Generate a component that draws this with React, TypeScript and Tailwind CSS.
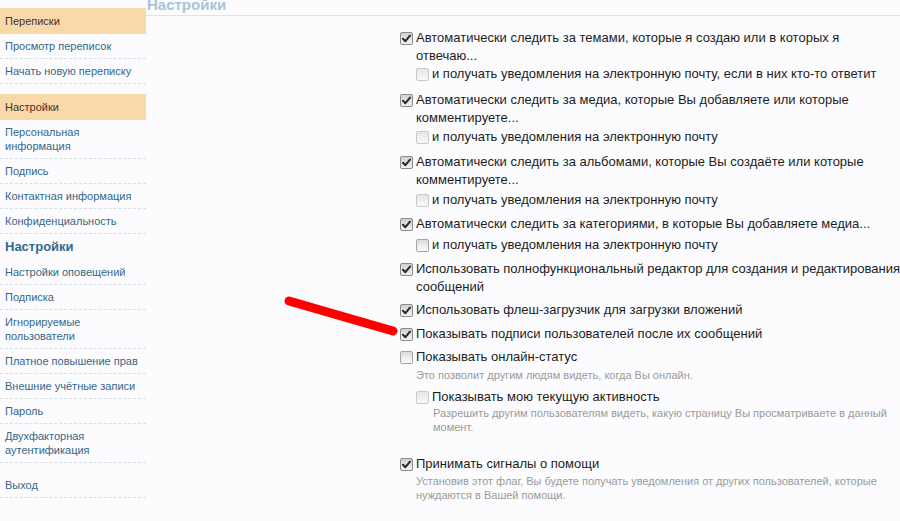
import React from "react";

type Box = "checked" | "unchecked" | "disabled";

function CheckBox({ state }: { state: Box }) {
  const cls =
    state === "checked"
      ? "border-[#8a8a8a] bg-linear-to-b from-[#d2d2d2] to-[#f2f2f2]"
      : state === "unchecked"
      ? "border-[#a4a4a4] bg-linear-to-b from-[#dcdcdc] to-[#fbfbfb]"
      : "border-[#c9c9c9] bg-linear-to-b from-[#e6e6e6] to-[#f8f8f8]";
  return (
    <span
      className={`mt-[3px] flex h-[13px] w-[13px] shrink-0 items-center justify-center rounded-[2px] border ${cls}`}
    >
      {state === "checked" && (
        <svg width="11" height="11" viewBox="0 0 11 11">
          <path
            d="M2 5.8 L4.4 8.2 L9 2.6"
            fill="none"
            stroke="#2a2a2a"
            strokeWidth="2"
            strokeLinecap="round"
            strokeLinejoin="round"
          />
        </svg>
      )}
    </span>
  );
}

function Row({
  state,
  children,
  className = "",
  sub = false,
}: {
  state: Box;
  children: React.ReactNode;
  className?: string;
  sub?: boolean;
}) {
  return (
    <div className={`flex gap-[3px] ${sub ? "pl-[16px]" : ""} ${className}`}>
      <CheckBox state={state} />
      <div className="whitespace-nowrap text-[13px] leading-[18px] text-[#1c1c1c]">{children}</div>
    </div>
  );
}

function Desc({ children, className = "", sub = false }: { children: React.ReactNode; className?: string; sub?: boolean }) {
  return (
    <div
      className={`whitespace-nowrap text-[11px] leading-[14px] text-[#9a9a9a] ${sub ? "pl-[33px]" : "pl-[16px]"} ${className}`}
    >
      {children}
    </div>
  );
}

function SideItem({ children }: { children: React.ReactNode }) {
  return (
    <div className="border-b border-dashed border-[#d6dfe5] px-[5px] pt-[5px] pb-[5px] text-[11px] leading-[14px] text-[#356787]">
      {children}
    </div>
  );
}

function SideHeader({ children, className = "" }: { children: React.ReactNode; className?: string }) {
  return (
    <div className={`flex h-[26px] items-center bg-[#f9d8aa] px-[5px] text-[11px] text-[#4a321a] ${className}`}>
      {children}
    </div>
  );
}

export default function App() {
  return (
    <div
      className="relative h-[521px] w-[900px] overflow-hidden bg-[#fcfcfe]"
      style={{ fontFamily: '"Liberation Sans", Arial, sans-serif' }}
    >
      <div className="flex">
        <aside className="w-[146px] shrink-0 pt-[8px]">
          <SideHeader>Переписки</SideHeader>
          <SideItem>Просмотр переписок</SideItem>
          <SideItem>Начать новую переписку</SideItem>
          <SideHeader className="mt-[10px]">Настройки</SideHeader>
          <SideItem>
            Персональная
            <br />
            информация
          </SideItem>
          <SideItem>Подпись</SideItem>
          <SideItem>Контактная информация</SideItem>
          <SideItem>Конфиденциальность</SideItem>
          <div className="flex h-[26px] items-center px-[5px] text-[13px] font-bold text-[#2f6a8e]">Настройки</div>
          <SideItem>Настройки оповещений</SideItem>
          <SideItem>Подписка</SideItem>
          <SideItem>
            Игнорируемые
            <br />
            пользователи
          </SideItem>
          <SideItem>Платное повышение прав</SideItem>
          <SideItem>Внешние учётные записи</SideItem>
          <SideItem>Пароль</SideItem>
          <SideItem>
            Двухфакторная
            <br />
            аутентификация
          </SideItem>
          <div className="mt-[10px]">
            <SideItem>Выход</SideItem>
          </div>
        </aside>

        <main className="min-w-0 flex-1">
          <div className="h-[16px] overflow-hidden border-b border-[#d7e5ee] pl-[1px]">
            <div className="-mt-[3px] text-[15px] leading-[16px] font-bold text-[#a9c4d6]">Настройки</div>
          </div>

          <div className="pl-[254px]">
            <Row state="checked" className="mt-[13px]">
              Автоматически следить за темами, которые я создаю или в которых я
              <br />
              отвечаю...
            </Row>
            <Row state="disabled" sub>
              и получать уведомления на электронную почту, если в них кто-то ответит
            </Row>

            <Row state="checked" className="mt-[8px]">
              Автоматически следить за медиа, которые Вы добавляете или которые
              <br />
              комментируете...
            </Row>
            <Row state="disabled" sub className="mt-[1px]">
              и получать уведомления на электронную почту
            </Row>

            <Row state="checked" className="mt-[7px]">
              Автоматически следить за альбомами, которые Вы создаёте или которые
              <br />
              комментируете...
            </Row>
            <Row state="disabled" sub className="mt-[2px]">
              и получать уведомления на электронную почту
            </Row>

            <Row state="checked" className="mt-[6px]">
              Автоматически следить за категориями, в которые Вы добавляете медиа...
            </Row>
            <Row state="unchecked" sub className="mt-[3px]">
              и получать уведомления на электронную почту
            </Row>

            <Row state="checked" className="mt-[6px]">
              Использовать полнофункциональный редактор для создания и редактирования
              <br />
              сообщений
            </Row>
            <Row state="checked" className="mt-[5px]">
              Использовать флеш-загрузчик для загрузки вложений
            </Row>
            <Row state="checked" className="mt-[6px]">
              Показывать подписи пользователей после их сообщений
            </Row>
            <Row state="unchecked" className="mt-[5px]">
              Показывать онлайн-статус
            </Row>
            <Desc className="mt-[2px]">Это позволит другим людям видеть, когда Вы онлайн.</Desc>
            <Row state="disabled" sub className="mt-[6px]">
              Показывать мою текущую активность
            </Row>
            <Desc sub>
              Разрешить другим пользователям видеть, какую страницу Вы просматриваете в данный
              <br />
              момент.
            </Desc>

            <Row state="checked" className="mt-[21px]">
              Принимать сигналы о помощи
            </Row>
            <Desc className="mt-[1px]">
              Установив этот флаг, Вы будете получать уведомления от других пользователей, которые
              <br />
              нуждаются в Вашей помощи.
            </Desc>
          </div>
        </main>
      </div>

      <svg className="pointer-events-none absolute left-0 top-0" width="900" height="521">
        <line x1="289" y1="301" x2="393" y2="331" stroke="#ff0000" strokeWidth="9" strokeLinecap="round" />
      </svg>
    </div>
  );
}
